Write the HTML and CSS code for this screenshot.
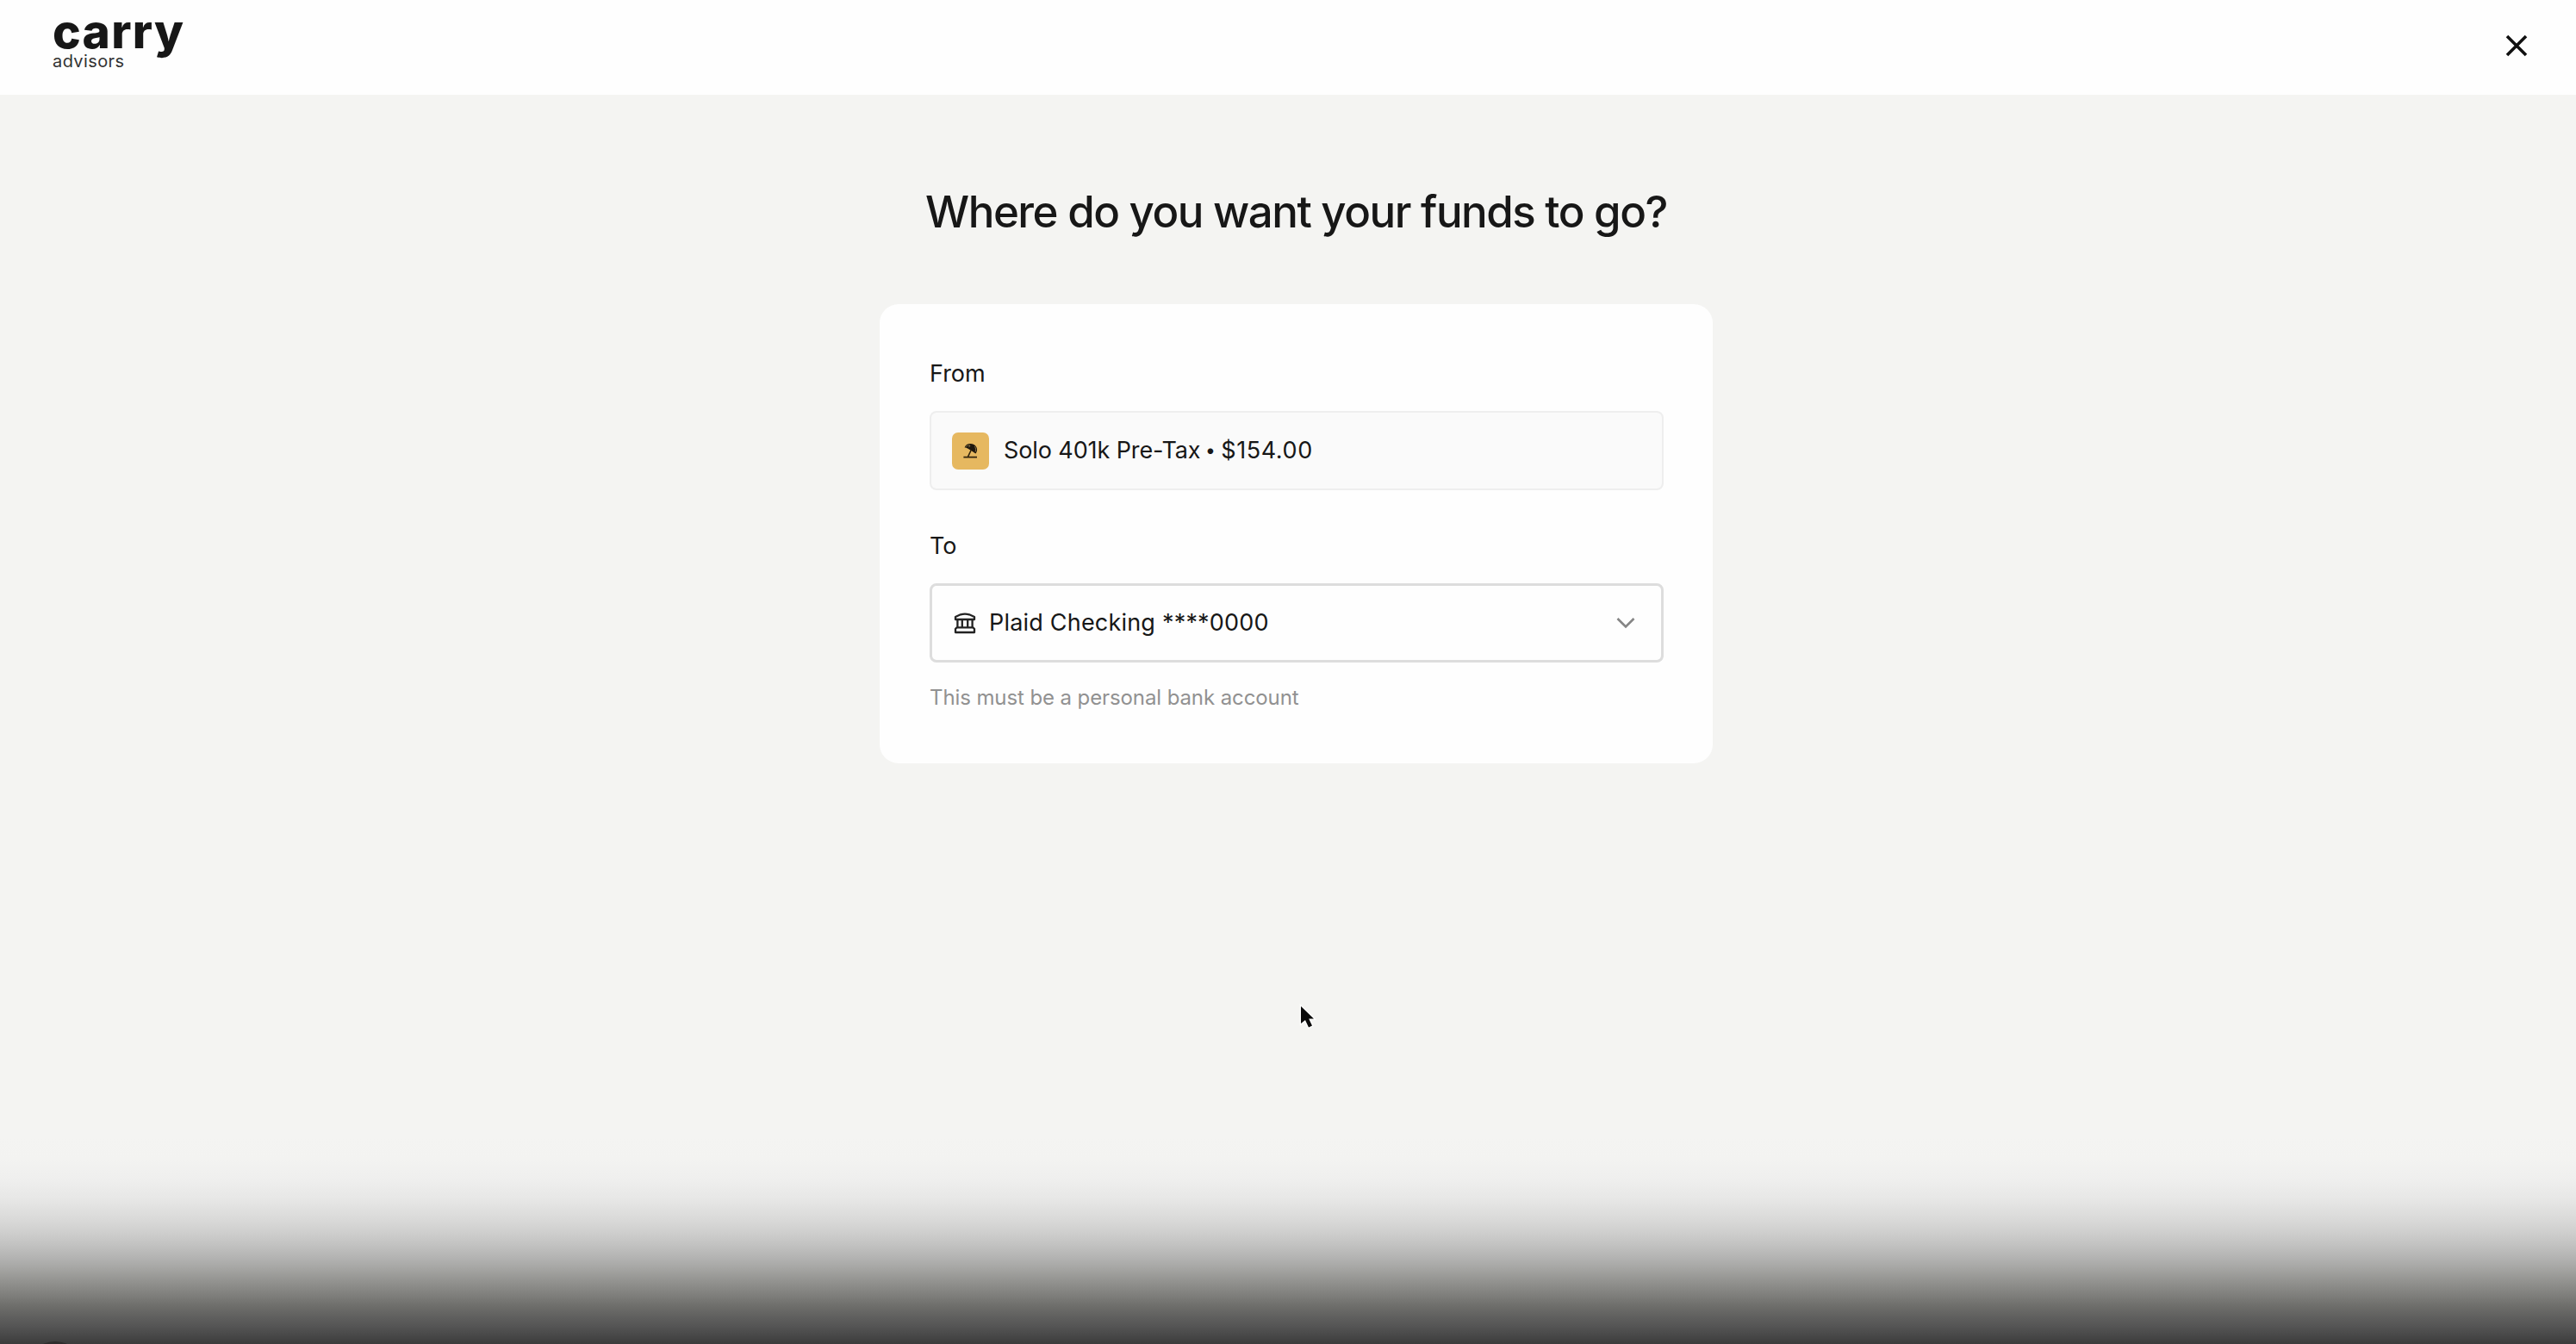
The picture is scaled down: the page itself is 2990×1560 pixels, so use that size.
FILE: index.html
```html
<!DOCTYPE html>
<html lang="en">
<head>
    <meta charset="UTF-8">
    <meta name="viewport" content="width=device-width, initial-scale=1.0">
    <title>Carry Advisors</title>
    <link rel="stylesheet" href="styles.css">
</head>
<body>
    <header class="header">
        <div class="logo">
            <span class="logo-name">carry</span>
            <span class="logo-sub">advisors</span>
        </div>
        <button class="close-btn" aria-label="Close">
            <svg width="28" height="28" viewBox="0 0 28 28"><path d="M3 3L25 25M25 3L3 25"/></svg>
        </button>
    </header>

    <main class="container">
        <h1>Where do you want your funds to go?</h1>

        <div class="card">
            <div class="label">From</div>
            <div class="field field-from">
                <div class="account-icon">
                    <svg width="18" height="18" viewBox="0 0 18 18">
                        <path class="fill" d="M1.6 5.5C3 1 8.5 0 12.4 2C16.5 4.3 17.3 9.2 14.4 12.6L10.8 10L5.6 6.8C4 5.8 2.6 5.4 1.6 5.5Z"/>
                        <path class="shade" d="M3.2 4.4C4.5 3.2 6.2 2.8 8 3L6.6 5.2M13.3 4.2C14.8 6 15 8.5 14 10.4"/>
                        <path class="line" d="M9.4 8L5.4 16.4M.4 16.6H16"/>
                    </svg>
                </div>
                <div class="from-text">Solo 401k Pre-Tax <span class="dot">•</span> <span class="amount">$154.00</span></div>
            </div>

            <div class="label label-to">To</div>
            <div class="field field-to">
                <svg class="bank-icon" width="26" height="26" viewBox="0 0 26 26">
                    <path d="M2 6L8 3.3Q13 2 18 3.3L24 6V9H2ZM4.4 9V18M9.8 9V18M16.2 9V18M21.6 9V18M3.6 18.4H22.4L24 20V24H2V20Z"/>
                </svg>
                <div class="to-text">Plaid Checking ****0000</div>
                <svg class="chevron" width="24" height="16" viewBox="0 0 24 16"><path d="M2.5 3L12 12.5L21.5 3"/></svg>
            </div>
            <div class="hint">This must be a personal bank account</div>
        </div>
    </main>

    <!-- Bottom fade with the edge of the round button -->
    <div class="fade">
        <div class="round"></div>
    </div>

    <svg class="cursor" width="28" height="36" viewBox="0 0 28 36">
        <path d="M5 3V23L10 19L14 27.5L18 25.5L14.2 17.5H20Z"/>
    </svg>
</body>
</html>
```
FILE: styles.css
```css
* {
    box-sizing: border-box;
}

body {
    margin: 0;
    height: 1560px;
    position: relative;
    overflow: hidden;
    font-family: Inter, "Liberation Sans", sans-serif;
    background-color: #f4f4f2;
    color: #171717;
}

.header {
    height: 110px;
    background-color: #fefefe;
    display: flex;
    justify-content: space-between;
    padding: 11px 55px 0 61px;
}

.logo {
    display: flex;
    flex-direction: column;
    align-items: flex-start;
}

.logo-name {
    font-size: 55px;
    font-weight: 800;
    line-height: 51px;
    letter-spacing: 1.3px;
}

.logo-sub {
    font-size: 20px;
    line-height: 19px;
    letter-spacing: 0.4px;
    color: #333;
}

.close-btn {
    width: 28px;
    height: 28px;
    margin-top: 28px;
    padding: 0;
    border: none;
    background: none;
}

.close-btn svg {
    display: block;
}

.close-btn path {
    fill: none;
    stroke: #111;
    stroke-width: 3.6;
}

.container {
    width: 967px;
    margin-left: 1021px;
}

h1 {
    margin: 0;
    padding-top: 105px;
    height: 243px;
    font-size: 51px;
    line-height: 62px;
    font-weight: 550;
    letter-spacing: -1.5px;
    text-align: center;
    white-space: nowrap;
}

.card {
    height: 533px;
    padding: 59px 57px 0 58px;
    background-color: #fefefe;
    border-radius: 22px;
}

.label {
    height: 65px;
    font-size: 27px;
    line-height: 43px;
}

.label-to {
    margin-top: 43px;
}

.field {
    height: 92px;
    border-radius: 8px;
    display: flex;
    align-items: center;
    font-size: 27px;
    white-space: nowrap;
}

.field-from {
    background-color: #fafafa;
    border: 2px solid #eee;
    padding-left: 24px;
}

.field-to {
    border: 3px solid #ddd;
    padding: 0 29px 0 25px;
}

.from-text {
    padding-bottom: 2px;
    letter-spacing: -0.1px;
}

.dot {
    margin: 0 -1px 0 -2px;
    font-size: 21px;
    line-height: 20px;
    position: relative;
    top: -2px;
}

.amount {
    letter-spacing: 0.6px;
}

.to-text {
    padding-bottom: 2px;
    letter-spacing: 0.2px;
}

.account-icon {
    width: 43px;
    height: 43px;
    margin-right: 17px;
    border-radius: 7px;
    background-color: #e6b860;
    display: flex;
    align-items: center;
    justify-content: center;
}

.account-icon .fill {
    fill: #1d160c;
}

.account-icon .shade {
    fill: none;
    stroke: #8b7347;
    stroke-width: 1;
}

.account-icon .line {
    fill: none;
    stroke: #32240e;
    stroke-width: 1.6;
}

.bank-icon {
    margin-right: 15px;
}

.bank-icon path {
    fill: none;
    stroke: #222;
    stroke-width: 2.3;
    stroke-linejoin: round;
}

.chevron {
    margin-left: auto;
}

.chevron path {
    fill: none;
    stroke: #858585;
    stroke-width: 2.6;
}

.hint {
    margin-top: 20px;
    font-size: 24px;
    line-height: 42px;
    letter-spacing: -0.1px;
    color: #919191;
}

.fade {
    position: absolute;
    left: 0;
    right: 0;
    bottom: 0;
    height: 240px;
    overflow: hidden;
    background: linear-gradient(#f4f4f2 0, #f3f3f1 25px, #efefee 48px, #e7e7e6 72px, #d9d9d8 96px, #cfcfce 110px, #c2c2c1 125px, #b3b3b2 140px, #a8a8a6 150px, #939390 167px, #7f7f7c 183px, #6e6e6b 196px, #5e5e5d 210px, #545454 220px, #3c3c3c 240px);
}

.round {
    position: absolute;
    left: 30px;
    top: 237px;
    width: 68px;
    height: 68px;
    border-radius: 50%;
    background-color: #2f2d2d;
}

.cursor {
    position: absolute;
    left: 1505px;
    top: 1165px;
}

.cursor path {
    fill: #0a0a0a;
    stroke: #fff;
    stroke-width: 2.5;
    paint-order: stroke;
}
```
